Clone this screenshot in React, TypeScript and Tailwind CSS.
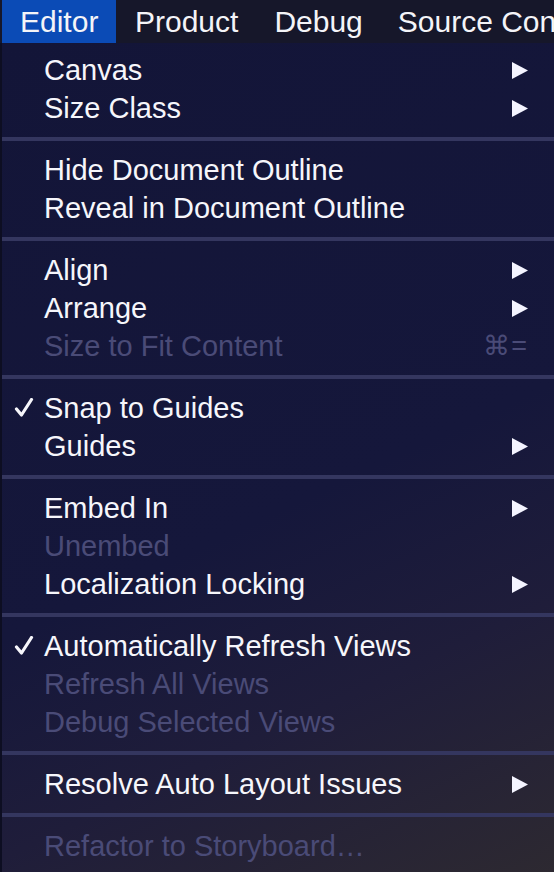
import React from "react";

type Item = { label: string; arrow?: boolean; disabled?: boolean; check?: boolean; shortcut?: string };

const sections: Item[][] = [
  [
    { label: "Canvas", arrow: true },
    { label: "Size Class", arrow: true },
  ],
  [{ label: "Hide Document Outline" }, { label: "Reveal in Document Outline" }],
  [
    { label: "Align", arrow: true },
    { label: "Arrange", arrow: true },
    { label: "Size to Fit Content", disabled: true, shortcut: "⌘=" },
  ],
  [
    { label: "Snap to Guides", check: true },
    { label: "Guides", arrow: true },
  ],
  [
    { label: "Embed In", arrow: true },
    { label: "Unembed", disabled: true },
    { label: "Localization Locking", arrow: true },
  ],
  [
    { label: "Automatically Refresh Views", check: true },
    { label: "Refresh All Views", disabled: true },
    { label: "Debug Selected Views", disabled: true },
  ],
  [{ label: "Resolve Auto Layout Issues", arrow: true }],
  [{ label: "Refactor to Storyboard…", disabled: true }],
];

function Arrow() {
  return (
    <svg width="16" height="17" viewBox="0 0 16 17" className="block">
      <path d="M0 0 L16 8.5 L0 17 Z" fill="#f4f4ff" />
    </svg>
  );
}

function Check() {
  return (
    <svg width="20" height="20" viewBox="0 0 20 20" className="absolute left-[12px] top-[9px]">
      <path d="M2.5 11 L7.5 17 L17.5 1.5" fill="none" stroke="#f6f6fb" strokeWidth="3.2" strokeLinecap="round" strokeLinejoin="round" />
    </svg>
  );
}

function Row({ item }: { item: Item }) {
  return (
    <div
      className={`relative flex h-[38px] items-center pl-[42px] pr-[26px] ${
        item.disabled ? "text-[#4a4b77]" : "text-[#f6f6fb]"
      }`}
    >
      {item.check && <Check />}
      <span className="flex-1 whitespace-nowrap">{item.label}</span>
      {item.arrow && <Arrow />}
      {item.shortcut && <span className="text-[27px] tracking-[1px]">{item.shortcut}</span>}
    </div>
  );
}

export default function App() {
  return (
    <div className="w-[554px] h-[872px] overflow-hidden flex flex-col text-[29px] leading-[34px] [font-family:'Liberation_Sans',Arial,sans-serif]">
      <div className="h-[43px] shrink-0 flex items-center bg-[#16172a] text-[#f4f4f8] text-[30px] whitespace-nowrap overflow-hidden">
        <div className="h-full ml-[2px] w-[114px] shrink-0 bg-[#0b4bb6] flex items-center pl-[18px]">Editor</div>
        <div className="pl-[19px] shrink-0">Product</div>
        <div className="pl-[36px] shrink-0">Debug</div>
        <div className="pl-[35px] shrink-0">Source Control</div>
      </div>
      <div className="flex-1 border-l-2 border-[#0d0e22] bg-[linear-gradient(155deg,#131538_0%,#15173b_55%,#1f1d3a_75%,#2d2931_100%)] pt-[8px]">
        {sections.map((sec, i) => (
          <div key={i}>
            {i > 0 && (
              <div className="h-[24px] flex items-center">
                <div className="h-[4px] w-full bg-[#34365f]" />
              </div>
            )}
            {sec.map((it) => (
              <Row key={it.label} item={it} />
            ))}
          </div>
        ))}
      </div>
    </div>
  );
}
